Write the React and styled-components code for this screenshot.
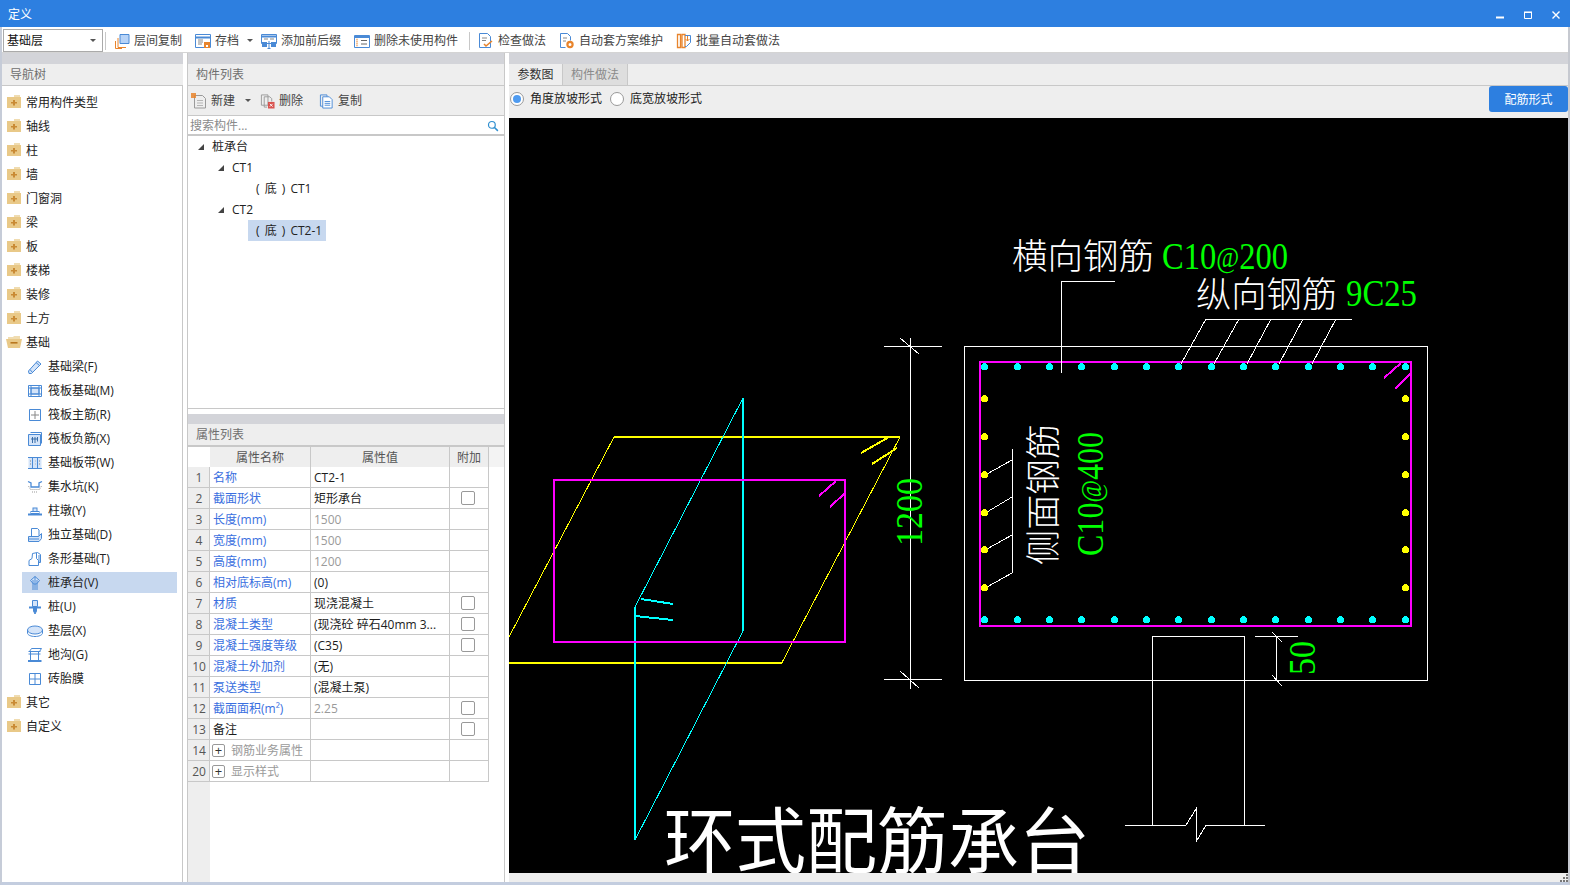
import React from "react";
import styled, { createGlobalStyle } from "styled-components";

const FONT = `"Open Sans", "Noto Sans CJK SC", sans-serif`;
const BLUE = "#2d7fe0";
const ICON = "#4a8ad6";
const ORANGE = "#e8842c";
const LINE = "#c8c8c8";

const Global = createGlobalStyle`
  html, body { margin: 0; padding: 0; background: #fff; overflow: hidden; }
  * { box-sizing: border-box; }
  #root { width: 1570px; height: 885px; }
`;

const Page = styled.div`
  width: 1570px; height: 885px; display: flex; flex-direction: column;
  font: 12px/16px ${FONT}; color: #222; background: #fff;
`;
const TitleBar = styled.header`
  height: 27px; flex: none; background: ${BLUE}; color: #fff;
  display: flex; align-items: center; padding: 2px 8px 0; justify-content: space-between;
`;
const WindowControls = styled.div`display: flex; gap: 20px; padding-right: 2px; align-items: center;`;
const Frame = styled.div`
  flex: 1; min-height: 0; display: flex; flex-direction: column;
  border-left: 2px solid #c6ccd8; border-right: 2px solid #c6c9d0; border-bottom: 3px solid #c3cddf;
`;
const Toolbar = styled.div`
  height: 26px; flex: none; display: flex; align-items: center; padding: 2px 0 0 1px;
  border-bottom: 1px solid #d4d4d4; background: #fff; color: #444;
`;
const Combo = styled.div`
  width: 100px; height: 23px; border: 1px solid #aaa; display: flex; align-items: center;
  justify-content: space-between; padding: 0 6px 0 3px; color: #111;
`;
const Caret = styled.span`
  display: inline-block; width: 0; height: 0; flex: none;
  border-style: solid; border-width: 3px 3.5px 0 3.5px; border-color: #555 transparent transparent transparent;
`;
const ToolSep = styled.span`width: 1px; height: 18px; background: #c8c8c8; margin: ${p => p.$m};`;
const ToolButton = styled.div`
  display: flex; align-items: center; gap: 4px; height: 22px; white-space: nowrap;
  padding: ${p => (p.$menu ? "0 1px 0 6px" : "0 6px")}; margin-right: 1px;
  & > ${Caret} { margin-left: 4px; }
`;
const Content = styled.main`flex: 1; min-height: 0; display: flex; gap: 4px;`;
const Column = styled.section`
  display: flex; flex-direction: column; width: ${p => p.$w || "auto"}; flex: ${p => (p.$w ? "none" : "1")}; min-width: 0;
`;
const Strip = styled.div`height: ${p => p.$h}px; flex: none; background: #d3d4d9;`;
const PanelHeader = styled.div`
  height: ${p => p.$h || 22}px; flex: none; background: #eee; color: #6e6e6e; padding-left: 8px;
  display: flex; align-items: center; border-bottom: ${p => (p.$thick ? 2 : 1)}px solid ${LINE};
`;
const SideBody = styled.div`
  flex: 1; background: #fff; border-right: 1px solid ${LINE}; padding-top: 6px;
`;
const NavRow = styled.div`
  height: 21px; margin: 0 5px 3px ${p => (p.$child ? 20 : 0)}px; display: flex; align-items: center;
  gap: 5px; padding-left: 5px; background: ${p => (p.$active ? "#c7d8ef" : "transparent")}; white-space: nowrap;
`;
const MidColumn = styled(Column)`border-left: 1px solid ${LINE}; border-right: 1px solid ${LINE};`;
const MidHeader = styled(PanelHeader)``;
const MidTools = styled.div`
  height: 30px; flex: none; background: #eee; border-bottom: 1px solid ${LINE};
  display: flex; align-items: center; padding-left: 3px; color: #444;
`;
const MidTool = styled.div`
  display: flex; align-items: center; gap: 4px; margin-right: ${p => p.$mr}px; white-space: nowrap;
  & > ${Caret} { margin-left: 6px; }
`;
const Search = styled.div`
  height: 20px; flex: none; border-bottom: 2px solid ${LINE}; display: flex; align-items: center;
  justify-content: space-between; padding: 2px 5px 0 2px; color: #8a8a8a;
`;
const Tree = styled.div`height: 273px; flex: none; border-bottom: 1px solid ${LINE};`;
const TreeRow = styled.div`
  height: 21px; display: flex; align-items: center; padding-left: ${p => p.$x}px; gap: 8px; white-space: nowrap;
`;
const Fold = styled.span`
  width: 0; height: 0; border-style: solid; border-width: 0 0 6px 6px; flex: none;
  border-color: transparent transparent #444 transparent;
`;
const Leaf = styled.span`
  padding: 0 4px 0 8px; height: 21px; display: flex; align-items: center; white-space: pre; word-spacing: 2px;
  background: ${p => (p.$active ? "#c7d8ef" : "transparent")};
`;
const GapBand = styled.div`height: 5px; flex: none; background: #fff;`;
const Grid = styled.div`
  flex: 1; background: linear-gradient(to right, #eee 22px, #fff 22px);
`;
const HeadRow = styled.div`
  height: 20px; display: grid; grid-template-columns: 22px 101px 139px 39px 1fr; background: #f3f3f3;
`;
const HeadCell = styled.div`
  background: ${p => (p.$blank ? "#fff" : "#eee")}; border-right: 1px solid ${p => (p.$blank ? "transparent" : LINE)};
  display: flex; align-items: center; justify-content: center; color: #555; padding-top: 2px;
`;
const PropRow = styled.div`
  width: 301px; height: 21px; display: grid; grid-template-columns: 22px 101px 139px 39px;
`;
const Cell = styled.div`
  display: flex; align-items: center; white-space: nowrap; overflow: hidden; padding: 2px 0 0 3px;
  border-right: 1px solid ${LINE}; border-bottom: 1px solid ${LINE};
  background: #fff; color: ${p => p.$c || "#1c1c1c"};
`;
const IndexCell = styled(Cell)`
  background: #eee; justify-content: center; padding-left: 1px; color: #555;
`;
const GroupCell = styled(Cell)`gap: 6px; padding-left: 2px; color: #9a9a9a;`;
const CheckCell = styled(Cell)`justify-content: center; padding: 0 2px 0 0;`;
const Check = styled.span`width: 14px; height: 14px; border: 1px solid #999; border-radius: 2px; background: #fff;`;
const Plus = styled.span`
  width: 13px; height: 13px; margin-top: -2px; border: 1px solid #999; border-radius: 2px; flex: none; color: #333;
  display: flex; align-items: center; justify-content: center; font-size: 13px; line-height: 11px;
`;
const Tabs = styled.div`
  height: 22px; flex: none; display: flex; background: #eee; border-bottom: 1px solid ${LINE};
`;
const Tab = styled.div`
  width: ${p => p.$w}px; display: flex; align-items: center; justify-content: center;
  color: ${p => (p.$on ? "#333" : "#8a8a8a")}; background: ${p => (p.$on ? "#eee" : "#dedede")};
  border-right: 1px solid ${LINE};
`;
const Options = styled.div`
  height: 32px; flex: none; background: #eee; display: flex; align-items: flex-start;
  justify-content: space-between; padding-left: 1px; color: #222;
`;
const OptionGroup = styled.div`height: 25px; display: flex; align-items: center; gap: 8px;`;
const Option = styled.label`display: flex; align-items: center; gap: 6px;`;
const Radio = styled.span`
  width: 14px; height: 14px; border-radius: 50%; border: 1px solid #999; background: #fff;
  display: flex; align-items: center; justify-content: center;
  &::after { content: ""; width: 8px; height: 8px; border-radius: 50%; background: ${p => (p.$on ? "#4f9bf0" : "transparent")}; }
`;
const PrimaryButton = styled.button`
  width: 79px; height: 26px; border: 0; border-radius: 3px; background: ${BLUE}; color: #fff;
  font: inherit; padding: 2px 0 0;
`;
const Canvas = styled.svg`display: block; width: 1059px; height: 755px; flex: none; background: #000;`;
const CadText = styled.text`
  fill: ${p => p.$c || "#fff"};
  font-family: ${p => (p.$serif ? `"Liberation Serif", serif` : `"Noto Sans CJK SC", sans-serif`)};
  font-size: ${p => p.$s}px;
  font-weight: ${p => p.$w || 400};
`;
const AtSign = styled.tspan`font-size: 29px;`;
const BottomBar = styled.div`flex: 1; background: #eee; display: flex; justify-content: flex-end; align-items: flex-end;`;
const FolderSvg = styled.svg`flex: none; overflow: visible; margin-top: -2px;`;

const Glyph = ({ w = 16, h = 16, children }) => (
  <svg width={w} height={h} viewBox="0 0 16 16" fill="none" stroke={ICON} strokeWidth="1" style={{ flex: "none" }}>{children}</svg>
);

const FolderClosed = () => (
  <FolderSvg width="14" height="13" viewBox="0 0 14 13">
    <path d="M7 0h6v2H7z" fill="#f0dcb0" />
    <rect x="0" y="2" width="14" height="11" fill="#e9c988" />
    <path d="M6 5h2v2h2v1.4H8v2H6v-2H4V7h2z" fill="#c98a34" />
  </FolderSvg>
);
const FolderOpen = () => (
  <FolderSvg width="14" height="13" viewBox="0 0 14 13">
    <path d="M1 2h5l1-1h6v4H1z" fill="#f0dcb0" />
    <path d="M-1 4h16l-2 9H1z" fill="#e9c988" />
    <rect x="3.5" y="7" width="7" height="1.6" fill="#b9771f" />
  </FolderSvg>
);

const toolIcons = {
  floorCopy: <><path d="M6 1.5h9v9H6z" fill="#b7d3f7" /><path d="M4 5v9.5h8M1.5 8v7.5H8" stroke={ORANGE} /></>,
  archive: <><path d="M.5 1.5h15v13H.5z" /><path d="M.5 4.5h15" strokeWidth="2" /><path d="M3 7h5M3 9h5M3 11h4" stroke="#888" /><rect x="9" y="9" width="6" height="6" fill={ORANGE} stroke="none" /><rect x="11" y="12" width="2" height="2" fill="#fff" stroke="none" /></>,
  prefix: <><path d="M.5 1.5h15v9H.5z" /><path d="M.5 3.5h15" strokeWidth="2" /><path d="M3 6h4M9 6h4" stroke="#888" /><rect x="1" y="9" width="5" height="5" fill={ICON} stroke="none" /><rect x="10" y="9" width="5" height="5" fill={ICON} stroke="none" /><path d="M8 8v7M6.5 15.5h3" /></>,
  prune: <><path d="M.5 2.5h15v12H.5z" /><path d="M.5 4h15" strokeWidth="2" /><path d="M7 7.5h6M7 11h6" stroke="#666" /><path d="M2.5 6.5h2M2.5 8.5h2M2.5 10.5h2M2.5 12.5h2" stroke={ORANGE} strokeWidth="1.5" strokeDasharray="1 1" /></>,
  check: <><path d="M1.5.5h8l3 3v11h-11z" /><path d="M4 5h5M4 7.5h4" stroke="#888" /><path d="M6 11l2 2 6-5" stroke={ORANGE} strokeWidth="1.6" /></>,
  scheme: <><path d="M1.5.5h7l3 3v4M1.5.5v14h5" /><path d="M4 5h4M4 8h3" stroke="#888" /><circle cx="11" cy="11.5" r="2.6" stroke={ORANGE} strokeWidth="2.2" /></>,
  batch: <><path d="M1.5 1.5h3v13h-3zM6 1.5h3v13H6z" stroke={ORANGE} strokeWidth="1.3" /><path d="M9 2.5h5.5v7l-4 4H9" stroke={ICON} /><path d="M11.5 3v5M9.5 6l2 2 2-2" stroke={ORANGE} /></>,
  create: <><path d="M3.5 2.5h8l3 3v9.5h-11z" stroke="#9a9a9a" /><path d="M6 7.5h6M6 10h6M6 12.5h6" stroke="#b5b5b5" /><rect x="0" y="0" width="5" height="5" fill={ORANGE} stroke="none" opacity=".85" /></>,
  remove: <><path d="M1.5 1.5h7v11h-7z" stroke="#9a9a9a" /><path d="M4.5 3.5h6l2 2v3M4.5 3.5v11h3" stroke="#9a9a9a" /><rect x="8.5" y="9" width="7" height="7" fill="#d9534f" stroke="none" /><path d="M10.5 11l3 3M13.5 11l-3 3" stroke="#fff" /></>,
  duplicate: <><path d="M1.5 1.5h7v12h-7z" stroke={ICON} /><path d="M4 3.5h7l3 3v9H4z" fill="#fff" /><path d="M6 8.5h6M6 10.5h6M6 12.5h6" /></>,
  search: <><circle cx="6.5" cy="6.5" r="4.5" stroke="#2f8fd0" strokeWidth="1.6" /><path d="M10 10l4.5 4.5" stroke="#2f8fd0" strokeWidth="2" /></>,
};

const navIcons = {
  beam: <><path d="M1.5 12l9-10 3.5 3-9.5 9.5H2z" fill="#d4e4f9" /><path d="M9 3.5l3.5 3M3 10.5l2.5 3" /></>,
  raft: <><path d="M1.5 2.5h13v11h-13z" /><path d="M4 5h8v6H4z" fill="#d4e4f9" /><path d="M1.5 5h13M1.5 11h13M4 2.5v11M12 2.5v11" /></>,
  main: <><path d="M2.5 2.5h11v11h-11z" /><path d="M8 4v8M4 8h8" stroke="#888" /></>,
  neg: <><path d="M3.5 1.5h11v11" /><path d="M1.5 3.5h12v11h-12z" fill="#d4e4f9" /><path d="M5.5 6v6M8 6v6M4 8h7M10.5 6v4.5" stroke="#3a6ea8" /></>,
  strip: <><path d="M1.5 2.5h13v11h-13z" fill="#d4e4f9" stroke="none" /><path d="M1 2.5h14M1 13.5h14M5.5 2.5v11M10.5 2.5v11" /><path d="M3 6h1M3 9h1M8 6h.5M8 9h.5M12 6h1M12 9h1" stroke="#888" /></>,
  sump: <><path d="M1 2.5l3 1.5v4h8V4l3-1.5" strokeWidth="1.3" /><path d="M1.5 7l2 3.5h9l2-3.5M5 13h6" stroke="#999" strokeDasharray="1 1" /></>,
  pier: <><rect x="6" y="5" width="4" height="3.5" fill="#d4e4f9" /><rect x="4" y="8.5" width="8" height="2" /><path d="M1 11.5h14" strokeWidth="2" /></>,
  isolated: <><path d="M4.5 1.5h6l1.5 1.5v6.5h-7.5z" fill="#fff" /><path d="M1.5 9.5h10l3-3v5l-2.5 3h-10.5z" fill="#d4e4f9" /><path d="M1.5 12h10.5" /></>,
  stripf: <><path d="M5.5 2.5l5-1 3 2v8h-2" /><path d="M5.5 2.5l-.5 5-3 2v5h9.5v-5l-2-2V2" /><path d="M12 4v7" /></>,
  cap: <><path d="M8 1.5l4.5 4-3 3.5h-3l-3-3.5z" fill="#d4e4f9" /><path d="M6 5v10M10 5v10M8 1.5V15" /></>,
  pile: <><path d="M5.5 1.5h5v6h-5z" fill="#d4e4f9" /><path d="M2 8.5h12" strokeWidth="2" /><path d="M6.5 9v3l1.5 3 1.5-3V9" fill={ICON} /></>,
  pad: <><ellipse cx="8" cy="7" rx="7.5" ry="4" fill="#d4e4f9" /><path d="M.5 7v3c0 2 3.5 3.5 7.5 3.5s7.5-1.5 7.5-3.5V7" /></>,
  trench: <><path d="M2.5 4.5l2-3h10l-2 3z" /><path d="M1.5 4.5h12M3.5 4.5v9M11.5 4.5v9" /><path d="M1 14h13.5" strokeWidth="2" /><path d="M1.5 7h12" /></>,
  brick: <><path d="M2.5 2.5h11v11h-11z" /><path d="M8 2.5v11M2.5 8h11" /></>,
};

const navTop = ["常用构件类型", "轴线", "柱", "墙", "门窗洞", "梁", "板", "楼梯", "装修", "土方"];
const navFoundation = [
  ["beam", "基础梁(F)"], ["raft", "筏板基础(M)"], ["main", "筏板主筋(R)"], ["neg", "筏板负筋(X)"],
  ["strip", "基础板带(W)"], ["sump", "集水坑(K)"], ["pier", "柱墩(Y)"], ["isolated", "独立基础(D)"],
  ["stripf", "条形基础(T)"], ["cap", "桩承台(V)"], ["pile", "桩(U)"], ["pad", "垫层(X)"],
  ["trench", "地沟(G)"], ["brick", "砖胎膜"],
];

const LABEL = "#3a6fe0";
const GREY = "#9a9a9a";
const props = [
  ["1", "名称", "CT2-1", false],
  ["2", "截面形状", "矩形承台", true],
  ["3", "长度(mm)", "1500", false, true],
  ["4", "宽度(mm)", "1500", false, true],
  ["5", "高度(mm)", "1200", false, true],
  ["6", "相对底标高(m)", "(0)", false],
  ["7", "材质", "现浇混凝土", true],
  ["8", "混凝土类型", "(现浇砼 碎石40mm 3...", true],
  ["9", "混凝土强度等级", "(C35)", true],
  ["10", "混凝土外加剂", "(无)", false],
  ["11", "泵送类型", "(混凝土泵)", false],
  ["12", "截面面积(m²)", "2.25", true, true],
];

const topDots = [984, 1017, 1049, 1081, 1114, 1146, 1178, 1211, 1243, 1275, 1308, 1340, 1372, 1405];
const sideDots = [398, 436, 474, 512, 549, 587];
const leaderTops = [[1206, 1181], [1239, 1214], [1271, 1247], [1303, 1279], [1336, 1312]];
const leaderSides = [[460, 474], [497, 512], [535, 549], [573, 587]];

const Drawing = () => (
  <Canvas viewBox="509 118 1059 755" shapeRendering="crispEdges" fill="none">
    <g stroke="#ffff00">
      <path d="M509 662.5H782" strokeWidth="2" />
      <path d="M614 437H900" strokeWidth="2" />
      <path d="M509 637L614 437M900 437L782 662.5" />
      <path d="M861 453L889 437M872 464L897 448" strokeWidth="2" />
    </g>
    <g stroke="#00ffff">
      <path d="M743 398V631M635 607V840" strokeWidth="2" />
      <path d="M743 398L635 607M743 631L635 840" />
      <path d="M641 599L673 604M635 616L673 620" strokeWidth="2" />
    </g>
    <g stroke="#ff00ff" strokeWidth="2">
      <path d="M554 480H845V642H554Z" />
      <path d="M819 496L836 481M830 507L845 493" />
      <path d="M980 362H1411V626H980Z" />
      <path d="M1384 378L1401 363M1395 389L1411 373" />
    </g>
    <g stroke="#fff">
      <path d="M964.5 346.5H1427.5V680.5H964.5Z" />
      <path d="M1061.5 373V281.5H1115" />
      <path d="M1206 319.5H1352" />
      {leaderTops.map(([a, b]) => <path key={a} d={`M${a} 319L${b} 364`} />)}
      <path d="M1012.5 449V573" />
      {leaderSides.map(([a, b]) => <path key={a} d={`M1012 ${a}L987 ${b}`} />)}
      <path d="M1152.5 825V636.5H1244.5V825" />
      <path d="M1125 825H1186L1196 809V842L1206 825H1265" />
      <path d="M1255 636.5H1298M1276.5 636V680" />
      <path d="M1272 632L1282 642M1272 675L1282 686" />
      <path d="M884 346.5H942M884 679.5H942M910.5 338V689" />
      <path d="M900 338L919 354M900 671L919 688" />
    </g>
    {topDots.map(x => <circle key={`t${x}`} cx={x + 0.5} cy={366.5} r="3.5" fill="#00ffff" />)}
    {topDots.map(x => <circle key={`b${x}`} cx={x + 0.5} cy={619.5} r="3.5" fill="#00ffff" />)}
    {sideDots.map(y => <circle key={`l${y}`} cx={984.5} cy={y + 0.5} r="3.5" fill="#ffff00" />)}
    {sideDots.map(y => <circle key={`r${y}`} cx={1405.5} cy={y + 0.5} r="3.5" fill="#ffff00" />)}

    <CadText $s={35} $w={300} x={1012} y={269} textLength={142} lengthAdjust="spacingAndGlyphs">横向钢筋</CadText>
    <CadText $s={38} $serif $c="#00ff00" x={1162} y={269} textLength={126} lengthAdjust="spacingAndGlyphs">C10<AtSign dy={-2}>@</AtSign><tspan dy={2}>200</tspan></CadText>
    <CadText $s={35} $w={300} x={1196} y={307} textLength={141} lengthAdjust="spacingAndGlyphs">纵向钢筋</CadText>
    <CadText $s={38} $serif $c="#00ff00" x={1346} y={306} textLength={71} lengthAdjust="spacingAndGlyphs">9C25</CadText>
    <CadText $s={35} $w={300} transform="rotate(-90 1056 565)" x={1056} y={565} textLength={141} lengthAdjust="spacingAndGlyphs">侧面钢筋</CadText>
    <CadText $s={38} $serif $c="#00ff00" transform="rotate(-90 1103 556)" x={1103} y={556} textLength={124} lengthAdjust="spacingAndGlyphs">C10<AtSign dy={-2}>@</AtSign><tspan dy={2}>400</tspan></CadText>
    <CadText $s={38} $serif $c="#00ff00" transform="rotate(-90 922 546)" x={922} y={546} textLength={68} lengthAdjust="spacingAndGlyphs">1200</CadText>
    <CadText $s={38} $serif $c="#00ff00" transform="rotate(-90 1315 675)" x={1315} y={675} textLength={34} lengthAdjust="spacingAndGlyphs">50</CadText>
    <CadText $s={72} x={664} y={867} textLength={426} lengthAdjust="spacingAndGlyphs">环式配筋承台</CadText>
  </Canvas>
);

export default function App() {
  return (
    <Page>
      <Global />
      <TitleBar>
        <span>定义</span>
        <WindowControls>
          <svg width="8" height="8" viewBox="0 0 8 8"><path d="M0 6.5h8" stroke="#fff" strokeWidth="2" /></svg>
          <svg width="8" height="8" viewBox="0 0 8 8" fill="none"><path d="M.5 1.5h7v6h-7z" stroke="#fff" /><path d="M0 1.2h8" stroke="#fff" strokeWidth="1.5" /></svg>
          <svg width="8" height="8" viewBox="0 0 8 8"><path d="M.5.5l7 7M7.5.5l-7 7" stroke="#fff" strokeWidth="1.4" /></svg>
        </WindowControls>
      </TitleBar>
      <Frame>
        <Toolbar>
          <Combo>基础层<Caret /></Combo>
          <ToolSep $m="0 2px" />
          <ToolButton><Glyph>{toolIcons.floorCopy}</Glyph>层间复制</ToolButton>
          <ToolButton $menu><Glyph>{toolIcons.archive}</Glyph>存档<Caret /></ToolButton>
          <ToolButton><Glyph>{toolIcons.prefix}</Glyph>添加前后缀</ToolButton>
          <ToolButton><Glyph>{toolIcons.prune}</Glyph>删除未使用构件</ToolButton>
          <ToolSep $m="0 2px 0 4px" />
          <ToolButton><Glyph>{toolIcons.check}</Glyph>检查做法</ToolButton>
          <ToolButton><Glyph>{toolIcons.scheme}</Glyph>自动套方案维护</ToolButton>
          <ToolButton><Glyph>{toolIcons.batch}</Glyph>批量自动套做法</ToolButton>
        </Toolbar>
        <Content>
          <Column $w="181px">
            <Strip $h={11} />
            <PanelHeader>导航树</PanelHeader>
            <SideBody>
              {navTop.map(t => <NavRow key={t}><FolderClosed />{t}</NavRow>)}
              <NavRow><FolderOpen />基础</NavRow>
              {navFoundation.map(([k, t]) => (
                <NavRow key={k} $child $active={k === "cap"}><Glyph>{navIcons[k]}</Glyph>{t}</NavRow>
              ))}
              <NavRow><FolderClosed />其它</NavRow>
              <NavRow><FolderClosed />自定义</NavRow>
            </SideBody>
          </Column>
          <MidColumn $w="318px">
            <Strip $h={11} />
            <MidHeader>构件列表</MidHeader>
            <MidTools>
              <MidTool $mr={9}><Glyph>{toolIcons.create}</Glyph>新建<Caret /></MidTool>
              <MidTool $mr={16}><Glyph w={15}>{toolIcons.remove}</Glyph>删除</MidTool>
              <MidTool $mr={0}><Glyph w={15}>{toolIcons.duplicate}</Glyph>复制</MidTool>
            </MidTools>
            <Search>搜索构件...<Glyph w={12} h={12}>{toolIcons.search}</Glyph></Search>
            <Tree>
              <TreeRow $x={10}><Fold />桩承台</TreeRow>
              <TreeRow $x={30}><Fold />CT1</TreeRow>
              <TreeRow $x={60}><Leaf>( 底 ) CT1</Leaf></TreeRow>
              <TreeRow $x={30}><Fold />CT2</TreeRow>
              <TreeRow $x={60}><Leaf $active>( 底 ) CT2-1</Leaf></TreeRow>
            </Tree>
            <GapBand />
            <Strip $h={10} />
            <PanelHeader $h={23} $thick>属性列表</PanelHeader>
            <Grid>
              <HeadRow>
                <HeadCell $blank />
                <HeadCell>属性名称</HeadCell>
                <HeadCell>属性值</HeadCell>
                <HeadCell>附加</HeadCell>
              </HeadRow>
              {props.map(([n, name, val, chk, dim]) => (
                <PropRow key={n}>
                  <IndexCell>{n}</IndexCell>
                  <Cell $c={LABEL}>{name}</Cell>
                  <Cell $c={dim ? GREY : undefined}>{val}</Cell>
                  <CheckCell>{chk && <Check />}</CheckCell>
                </PropRow>
              ))}
              <PropRow>
                <IndexCell>13</IndexCell>
                <Cell>备注</Cell>
                <Cell />
                <CheckCell><Check /></CheckCell>
              </PropRow>
              <PropRow>
                <IndexCell>14</IndexCell>
                <GroupCell><Plus>+</Plus>钢筋业务属性</GroupCell>
                <Cell />
                <Cell />
              </PropRow>
              <PropRow>
                <IndexCell>20</IndexCell>
                <GroupCell><Plus>+</Plus>显示样式</GroupCell>
                <Cell />
                <Cell />
              </PropRow>
            </Grid>
          </MidColumn>
          <Column>
            <Strip $h={11} />
            <Tabs>
              <Tab $w={54} $on>参数图</Tab>
              <Tab $w={65}>构件做法</Tab>
            </Tabs>
            <Options>
              <OptionGroup>
                <Option><Radio $on />角度放坡形式</Option>
                <Option><Radio />底宽放坡形式</Option>
              </OptionGroup>
              <PrimaryButton>配筋形式</PrimaryButton>
            </Options>
            <Drawing />
            <BottomBar>
              <svg width="8" height="8" viewBox="0 0 8 8" fill="#777">
                <path d="M6 0h2v2H6zM3 3h2v2H3zM6 3h2v2H6zM0 6h2v2H0zM3 6h2v2H3zM6 6h2v2H6z" />
              </svg>
            </BottomBar>
          </Column>
        </Content>
      </Frame>
    </Page>
  );
}
